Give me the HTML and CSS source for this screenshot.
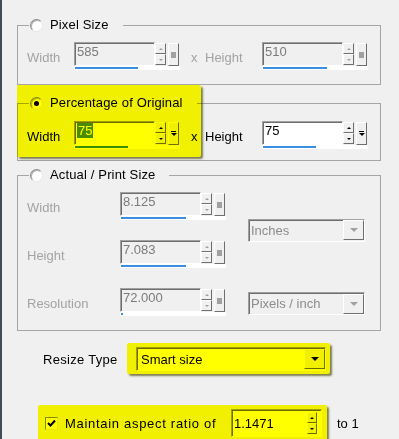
FILE: index.html
```html
<!DOCTYPE html>
<html lang="en">

<head>
    <meta charset="UTF-8">
    <meta name="viewport" content="width=device-width, initial-scale=1.0">
    <title>Resize</title>
    <link rel="stylesheet" href="styles.css">
</head>

<body>
    <div class="dialog">
        <!-- Pixel size (disabled) -->
        <fieldset class="group g-pixel">
            <legend><span class="radio"></span>Pixel Size</legend>
            <div class="size-row off">
                <span class="lbl lbl-w">Width</span>
                <div class="num off">
                    <div class="num-box">
                        <span class="num-field">585</span>
                        <span class="spin"><i class="up"></i><i class="dn"></i></span>
                        <span class="drop"></span>
                    </div>
                    <div class="track"><div class="bar" style="width: 63px"></div></div>
                </div>
                <span class="x">x</span>
                <span class="lbl lbl-h">Height</span>
                <div class="num off">
                    <div class="num-box">
                        <span class="num-field">510</span>
                        <span class="spin"><i class="up"></i><i class="dn"></i></span>
                        <span class="drop"></span>
                    </div>
                    <div class="track"><div class="bar" style="width: 64px"></div></div>
                </div>
            </div>
        </fieldset>

        <!-- Percentage (active) -->
        <fieldset class="group g-percent">
            <legend><span class="radio on"></span>Percentage of Original</legend>
            <div class="size-row">
                <span class="lbl lbl-w">Width</span>
                <div class="num">
                    <div class="num-box">
                        <span class="num-field"><span class="sel">75</span></span>
                        <span class="spin"><i class="up"></i><i class="dn"></i></span>
                        <span class="drop"></span>
                    </div>
                    <div class="track"><div class="bar" style="width: 53px"></div></div>
                </div>
                <span class="x">x</span>
                <span class="lbl lbl-h">Height</span>
                <div class="num">
                    <div class="num-box">
                        <span class="num-field">75</span>
                        <span class="spin"><i class="up"></i><i class="dn"></i></span>
                        <span class="drop"></span>
                    </div>
                    <div class="track"><div class="bar" style="width: 53px"></div></div>
                </div>
            </div>
        </fieldset>

        <!-- Actual / print size (disabled) -->
        <fieldset class="group g-print">
            <legend><span class="radio"></span>Actual / Print Size</legend>
            <div class="print-grid off">
                <span class="lbl r1">Width</span>
                <div class="num off r1">
                    <div class="num-box">
                        <span class="num-field">8.125</span>
                        <span class="spin"><i class="up"></i><i class="dn"></i></span>
                        <span class="drop"></span>
                    </div>
                    <div class="track"><div class="bar" style="width: 65px"></div></div>
                </div>
                <div class="select unit-sel">Inches<span class="arrow"></span></div>

                <span class="lbl r2">Height</span>
                <div class="num off r2">
                    <div class="num-box">
                        <span class="num-field">7.083</span>
                        <span class="spin"><i class="up"></i><i class="dn"></i></span>
                        <span class="drop"></span>
                    </div>
                    <div class="track"><div class="bar" style="width: 65px"></div></div>
                </div>

                <span class="lbl r3">Resolution</span>
                <div class="num off r3">
                    <div class="num-box">
                        <span class="num-field">72.000</span>
                        <span class="spin"><i class="up"></i><i class="dn"></i></span>
                        <span class="drop"></span>
                    </div>
                    <div class="track"><div class="bar" style="width: 2px"></div></div>
                </div>
                <div class="select res-sel">Pixels / inch<span class="arrow"></span></div>
            </div>
        </fieldset>

        <div class="resize-row">
            <span class="resize-lbl">Resize Type</span>
            <div class="hl-wrap">
                <div class="select type-sel">Smart size<span class="arrow"></span></div>
                <div class="hl hl-type"></div>
            </div>
        </div>

        <div class="ratio-row">
            <div class="hl-wrap ratio-wrap">
                <span class="check">
                    <svg viewBox="0 0 11 11" width="11" height="11">
                        <polyline points="2,5 4.5,7.5 9,2.5" fill="none" stroke="#000" stroke-width="2" />
                    </svg>
                </span>
                <span class="ratio-lbl">Maintain aspect ratio of</span>
                <div class="ratio-input">
                    <span>1.1471</span>
                    <span class="spin"><i class="up"></i><i class="dn"></i></span>
                </div>
                <div class="hl hl-ratio"></div>
            </div>
            <span class="to-one">to 1</span>
        </div>

        <!-- highlight over the percentage option -->
        <div class="hl hl-percent"></div>
    </div>
</body>

</html>
```

FILE: styles.css
```css
* {
    margin: 0;
    padding: 0;
    box-sizing: border-box;
}

body {
    font-family: "Liberation Sans", Arial, sans-serif;
    font-size: 13px;
    line-height: 15px;
    color: #000;
    background-color: #f0f0f0;
}

.dialog {
    position: relative;
    isolation: isolate;
    min-height: 439px;
    padding: 18px 0 0 15px;
    border-left: 2px solid #434b59;
    background-color: #f0f0f0;
    overflow: hidden;
}

/* group boxes */
.group {
    width: 364px;
    border: 1px solid #a5a5a5;
    padding: 10px 0 14px 9px;
}

.group legend {
    display: flex;
    align-items: center;
    gap: 7px;
    height: 14px;
    line-height: 14px;
    margin-left: 2px;
    padding: 0 14px 0 1px;
    letter-spacing: 0.15px;
}

.g-percent {
    margin-top: 11px;
    padding-top: 11px;
    padding-bottom: 11px;
}

.g-print {
    margin-top: 7px;
    padding-top: 10px;
}

.radio {
    display: flex;
    align-items: center;
    justify-content: center;
    width: 13px;
    height: 13px;
    border-radius: 50%;
    background-color: #fff;
    border: 1px solid;
    border-color: #8a8a8a #e8e8e8 #e8e8e8 #8a8a8a;
    box-shadow: inset 1px 1px 0 #b4b4b4;
}

.radio.on::after {
    content: "";
    width: 5px;
    height: 5px;
    border-radius: 50%;
    background-color: #000;
}

.lbl {
    color: #000;
}

.off .lbl,
.size-row.off .x {
    color: #a3a3a3;
}

/* width x height rows */
.size-row {
    display: flex;
    align-items: flex-start;
}

.size-row .lbl,
.size-row .x {
    margin-top: 8px;
}

.lbl-w {
    width: 47px;
}

.lbl-h {
    width: 57px;
}

.x {
    width: 14px;
    margin-left: 11px;
}

/* numeric field with spinner */
.num {
    width: 106px;
}

.num-box {
    display: flex;
    height: 24px;
}

.num-field {
    width: 81px;
    height: 24px;
    padding: 1px 2px;
    border: 1px solid;
    border-color: #a0a0a0 #fff #fff #a0a0a0;
    box-shadow: inset 1px 1px 0 #6e6e6e;
    background-color: #fff;
}

.num.off .num-field {
    background-color: #f0f0f0;
    color: #7b7b7b;
}

.sel {
    background-color: #4a8cff;
    color: #fff;
    padding: 0 1px;
}

.spin {
    display: flex;
    flex-direction: column;
    width: 13px;
    padding-top: 1px;
}

.spin i {
    display: flex;
    align-items: center;
    justify-content: center;
    width: 11px;
    height: 11px;
    border: 1px solid;
    border-color: #fff #6e6e6e #6e6e6e #fff;
    background-color: #f0f0f0;
}

.spin i::after {
    content: "";
    border-left: 2px solid transparent;
    border-right: 2px solid transparent;
}

.spin .up::after {
    border-bottom: 2px solid #000;
}

.spin .dn::after {
    border-top: 2px solid #000;
}

.off .spin .up::after {
    border-bottom-color: #a0a0a0;
}

.off .spin .dn::after {
    border-top-color: #a0a0a0;
}

.drop {
    display: flex;
    flex-direction: column;
    align-items: center;
    justify-content: center;
    gap: 1px;
    width: 11px;
    height: 23px;
    margin-top: 1px;
    border: 1px solid;
    border-color: #fff #6e6e6e #6e6e6e #fff;
    background-color: #f0f0f0;
}

.drop::before {
    content: "";
    width: 5px;
    height: 1px;
    background-color: #000;
}

.drop::after {
    content: "";
    border-left: 3px solid transparent;
    border-right: 3px solid transparent;
    border-top: 3px solid #000;
}

.off .drop::before {
    width: 5px;
    height: 6px;
    background-color: #a0a0a0;
}

.off .drop::after {
    display: none;
}

.track {
    height: 4px;
    padding-top: 1px;
    background-color: #fff;
}

.bar {
    height: 2px;
    margin-left: 1px;
    background-color: #3c8fe0;
}

/* print size grid */
.print-grid {
    display: grid;
    grid-template-columns: 93px 128px 117px;
    grid-template-rows: 28px 28px 28px;
    row-gap: 20px;
}

.print-grid .lbl {
    align-self: center;
    padding-top: 2px;
}

.r1 { grid-row: 1; }
.r2 { grid-row: 2; }
.r3 { grid-row: 3; }

.unit-sel {
    grid-column: 3;
    grid-row: 1 / 3;
    align-self: center;
}

.res-sel {
    grid-column: 3;
    grid-row: 3;
    align-self: end;
    margin-bottom: 1px;
}

/* drop-down boxes */
.select {
    display: flex;
    align-items: center;
    width: 117px;
    height: 23px;
    padding-left: 2px;
    border: 1px solid;
    border-color: #a0a0a0 #fff #fff #a0a0a0;
    box-shadow: inset 1px 1px 0 #6e6e6e;
    background-color: #f0f0f0;
    color: #8c8c8c;
}

.select .arrow {
    display: flex;
    align-items: center;
    justify-content: center;
    width: 21px;
    height: 20px;
    margin-left: auto;
    border: 1px solid;
    border-color: #fff #6e6e6e #6e6e6e #fff;
    background-color: #f0f0f0;
}

.select .arrow::after {
    content: "";
    border-left: 4px solid transparent;
    border-right: 4px solid transparent;
    border-top: 4px solid #a0a0a0;
}

/* resize type */
.resize-row {
    display: flex;
    align-items: center;
    margin-top: 16px;
    padding-left: 26px;
}

.resize-lbl {
    width: 93px;
    letter-spacing: 0.3px;
}

.hl-wrap {
    position: relative;
}

.type-sel {
    width: 190px;
    height: 24px;
    padding-left: 4px;
    background-color: #fff;
    color: #000;
}

.type-sel .arrow::after {
    border-top-color: #000;
}

/* aspect ratio */
.ratio-row {
    display: flex;
    align-items: center;
    margin-top: 38px;
    padding-left: 28px;
}

.ratio-wrap {
    display: flex;
    align-items: center;
}

.check {
    display: flex;
    align-items: center;
    justify-content: center;
    width: 13px;
    height: 13px;
    background-color: #fff;
    border: 1px solid;
    border-color: #8a8a8a #e8e8e8 #e8e8e8 #8a8a8a;
}

.ratio-lbl {
    width: 166px;
    margin-left: 7px;
    letter-spacing: 0.7px;
}

.ratio-input {
    display: flex;
    align-items: center;
    width: 91px;
    height: 28px;
    padding-left: 2px;
    border: 1px solid;
    border-color: #a0a0a0 #fff #fff #a0a0a0;
    box-shadow: inset 1px 1px 0 #6e6e6e;
    background-color: #fff;
}

.ratio-input .spin {
    margin-left: auto;
    margin-right: 1px;
    padding-top: 0;
}

.ratio-input .spin i {
    width: 10px;
    height: 11px;
}

.to-one {
    margin-left: 15px;
}

/* yellow marker highlights */
.hl {
    position: absolute;
    background-color: #ffff00;
    mix-blend-mode: multiply;
    border-radius: 2px;
    box-shadow: 2px 2px 2px rgba(70, 70, 0, 0.65);
    pointer-events: none;
}

.hl-percent {
    left: 15px;
    top: 85px;
    width: 184px;
    height: 72px;
}

.hl-type {
    left: -9px;
    top: -4px;
    right: -4px;
    bottom: -3px;
}

.hl-ratio {
    left: -7px;
    top: -4px;
    right: -5px;
    bottom: -6px;
}
```
